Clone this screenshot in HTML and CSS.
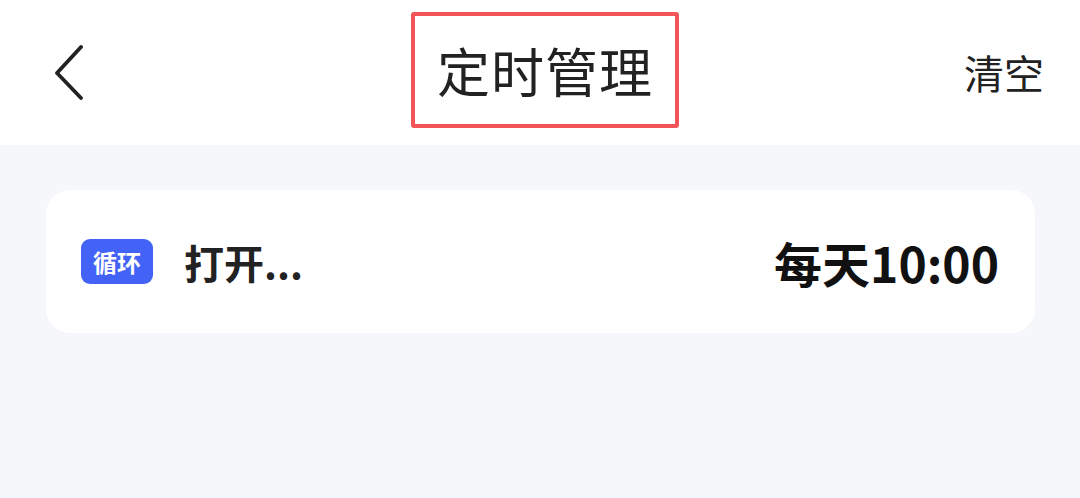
FILE: index.html
```html
<!DOCTYPE html>
<html>
<head>
	<title>定时管理</title>
	<link rel="stylesheet" href="styles.css">
</head>
<body>
	<div class="header">
		<div class="back">
			<svg width="40" height="60" viewBox="0 0 40 60">
				<path d="M29 7 L5 33 L29 58" fill="none" stroke="#222" stroke-width="3.8" stroke-linecap="round" stroke-linejoin="round"/>
			</svg>
		</div>
		<div class="title-box">
			<h1>定时管理</h1>
		</div>
		<div class="clear">清空</div>
	</div>

	<div class="list">
		<div class="card">
			<span class="badge">循环</span>
			<span class="name">打开...</span>
			<span class="when">每天10:00</span>
		</div>
	</div>
</body>
</html>
```

FILE: styles.css
```css
body {
	margin: 0;
	background-color: #f6f7fa;
	font-family: "Noto Sans CJK SC", "Noto Sans", sans-serif;
	color: #222;
}

.header {
	display: flex;
	align-items: center;
	justify-content: space-between;
	height: 145px;
	background-color: #fff;
	padding: 0 36px 0 52px;
	box-sizing: border-box;
}

.back {
	width: 40px;
	height: 60px;
	margin-top: -6px;
}

.title-box {
	border: 4px solid #f25457;
	border-radius: 3px;
	width: 268px;
	height: 116px;
	box-sizing: border-box;
	display: flex;
	align-items: center;
	justify-content: center;
	margin-top: -5px;
	margin-left: 34px;
}

h1 {
	font-size: 53px;
	font-weight: 400;
	margin: 0;
	line-height: 1;
	letter-spacing: 1px;
}

.clear {
	font-size: 40px;
	color: #222;
	margin-top: -2px;
}

.list {
	padding: 45px 45px 0 46px;
}

.card {
	display: flex;
	align-items: center;
	background-color: #fff;
	border-radius: 24px;
	height: 143px;
	padding: 0 36px 0 35px;
}

.badge {
	background-color: #4263f5;
	color: #fff;
	font-size: 24px;
	font-weight: 700;
	border-radius: 9px;
	width: 72px;
	height: 45px;
	display: flex;
	align-items: center;
	justify-content: center;
	margin-right: 31px;
}

.name {
	font-size: 40px;
	font-weight: 700;
	flex: 1;
}

.when {
	font-size: 48px;
	font-weight: 700;
	color: #111;
}
```
